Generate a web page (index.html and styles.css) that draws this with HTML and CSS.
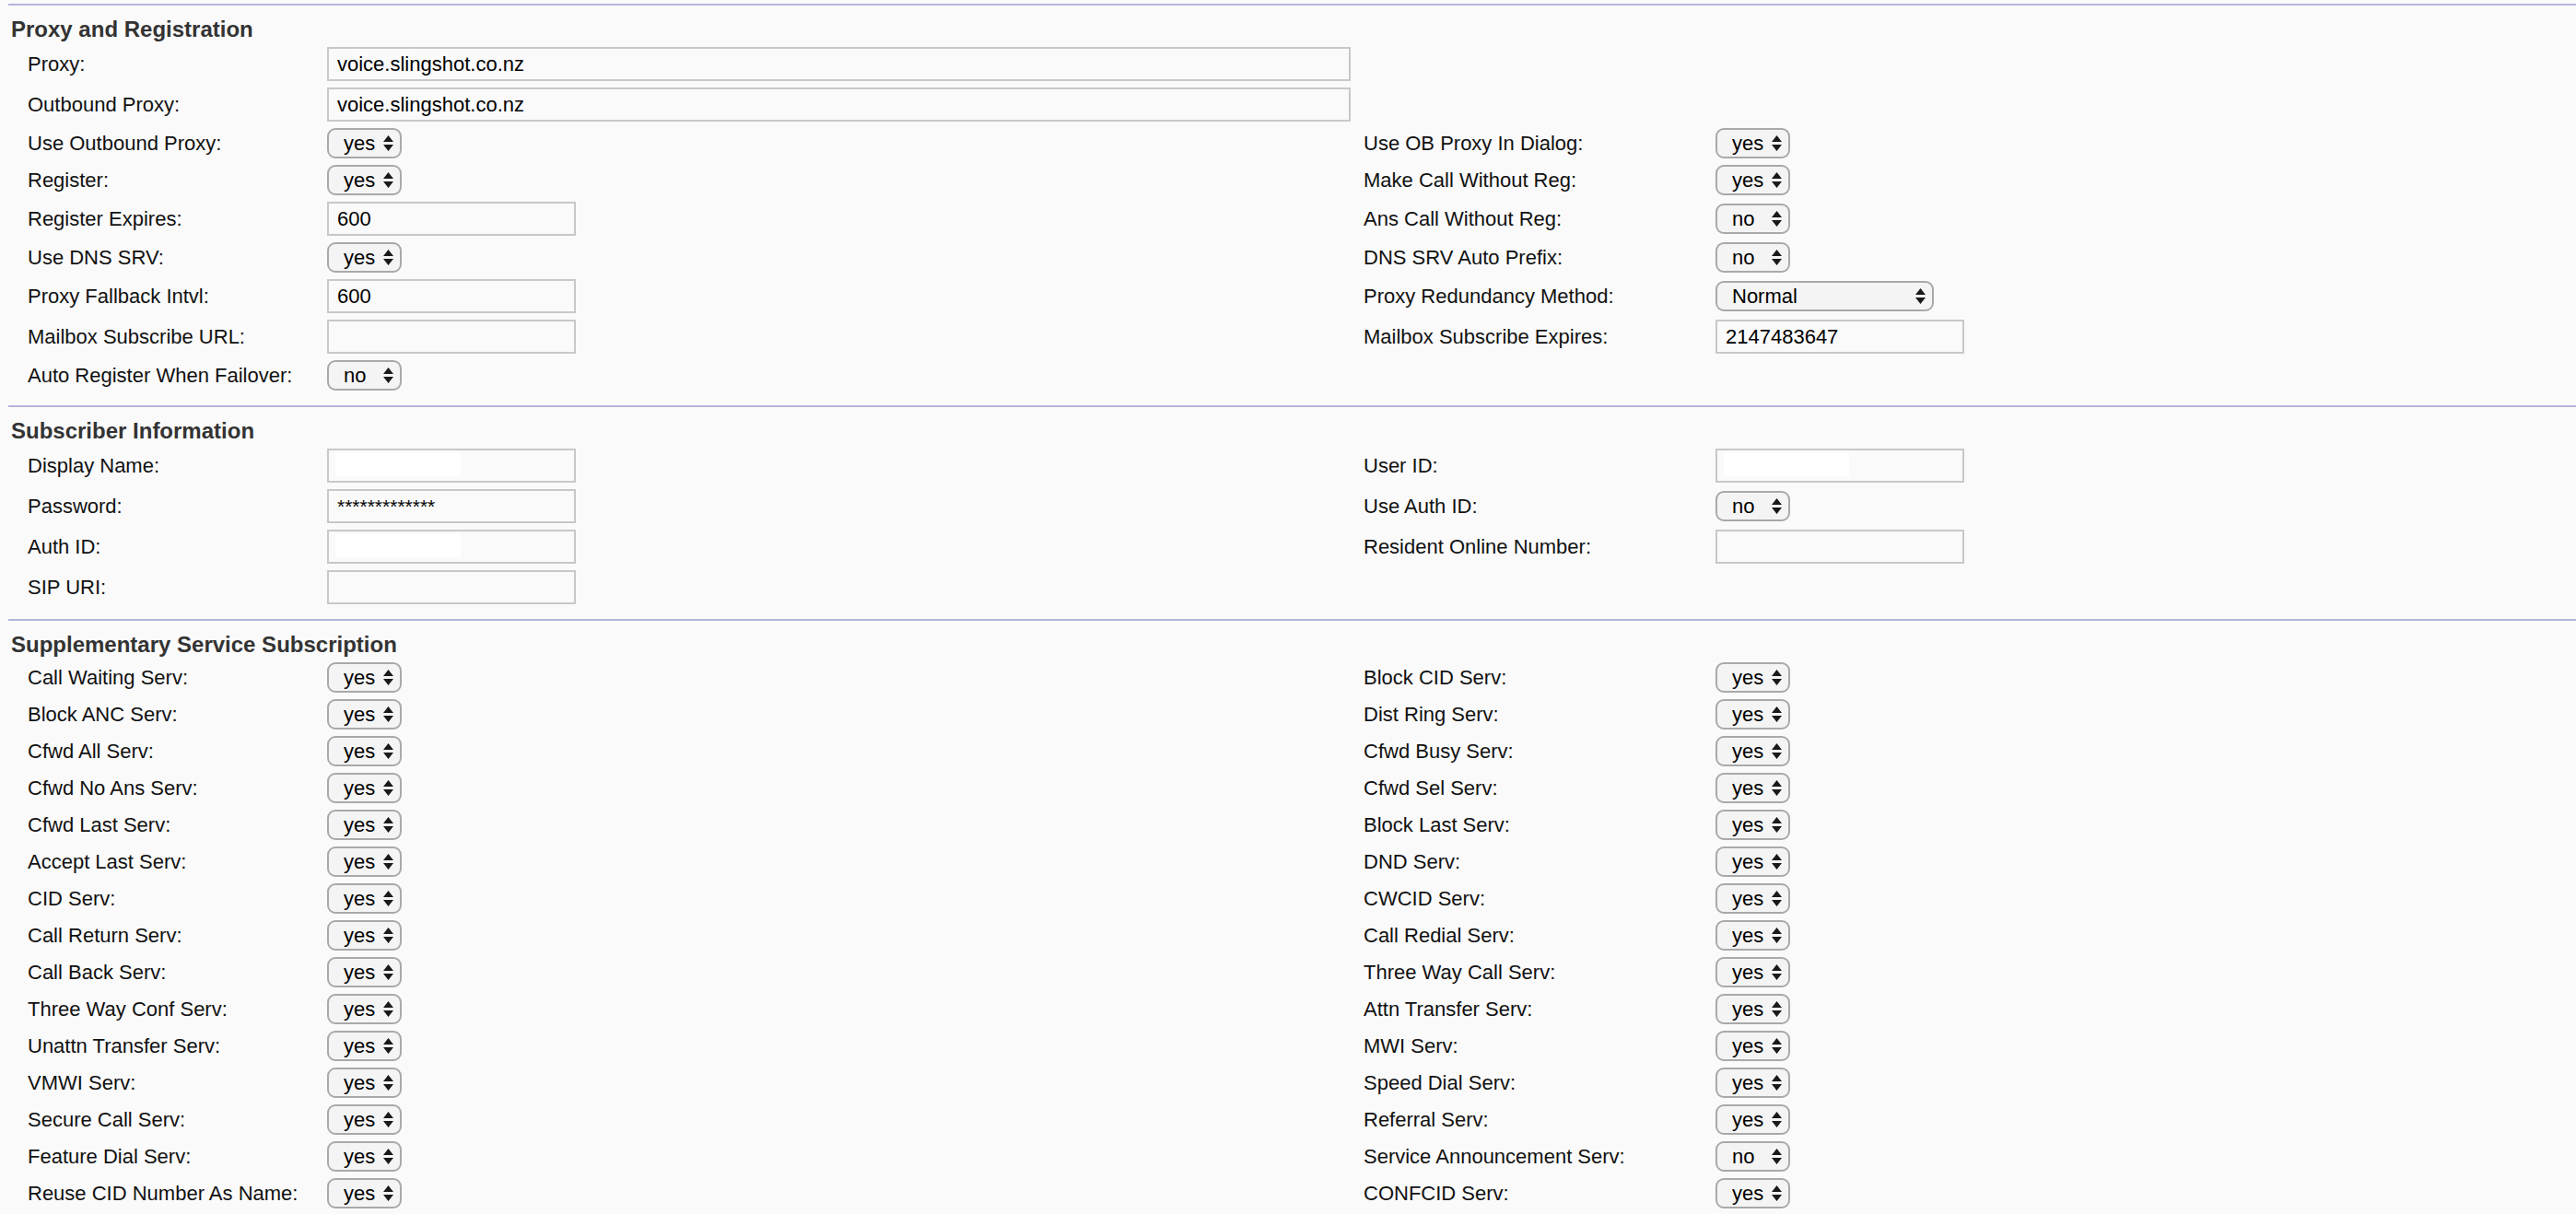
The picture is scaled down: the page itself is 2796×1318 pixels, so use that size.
FILE: index.html
```html
<!DOCTYPE html>
<html lang="en">
<head>
<meta charset="utf-8">
<title>Ext 1</title>
<link rel="stylesheet" href="styles.css">
</head>
<body>
<div class="page">

  <section class="sec">
    <h2 class="sec-title">Proxy and Registration</h2>
    <div class="row">
      <label class="lbl">Proxy:</label>
      <input class="txt wide" type="text" value="voice.slingshot.co.nz">
    </div>
    <div class="row">
      <label class="lbl">Outbound Proxy:</label>
      <input class="txt wide" type="text" value="voice.slingshot.co.nz">
    </div>
    <div class="row">
      <label class="lbl">Use Outbound Proxy:</label>
      <span class="sel"><select><option>yes</option></select><svg class="arr" viewBox="0 0 11 17"><path d="M0 7 5.5 0 11 7Z M0 10 5.5 17 11 10Z"/></svg></span>
      <label class="lbl">Use OB Proxy In Dialog:</label>
      <span class="sel"><select><option>yes</option></select><svg class="arr" viewBox="0 0 11 17"><path d="M0 7 5.5 0 11 7Z M0 10 5.5 17 11 10Z"/></svg></span>
    </div>
    <div class="row">
      <label class="lbl">Register:</label>
      <span class="sel"><select><option>yes</option></select><svg class="arr" viewBox="0 0 11 17"><path d="M0 7 5.5 0 11 7Z M0 10 5.5 17 11 10Z"/></svg></span>
      <label class="lbl">Make Call Without Reg:</label>
      <span class="sel"><select><option>yes</option></select><svg class="arr" viewBox="0 0 11 17"><path d="M0 7 5.5 0 11 7Z M0 10 5.5 17 11 10Z"/></svg></span>
    </div>
    <div class="row">
      <label class="lbl">Register Expires:</label>
      <input class="txt short" type="text" value="600">
      <label class="lbl">Ans Call Without Reg:</label>
      <span class="sel"><select><option>no</option></select><svg class="arr" viewBox="0 0 11 17"><path d="M0 7 5.5 0 11 7Z M0 10 5.5 17 11 10Z"/></svg></span>
    </div>
    <div class="row">
      <label class="lbl">Use DNS SRV:</label>
      <span class="sel"><select><option>yes</option></select><svg class="arr" viewBox="0 0 11 17"><path d="M0 7 5.5 0 11 7Z M0 10 5.5 17 11 10Z"/></svg></span>
      <label class="lbl">DNS SRV Auto Prefix:</label>
      <span class="sel"><select><option>no</option></select><svg class="arr" viewBox="0 0 11 17"><path d="M0 7 5.5 0 11 7Z M0 10 5.5 17 11 10Z"/></svg></span>
    </div>
    <div class="row">
      <label class="lbl">Proxy Fallback Intvl:</label>
      <input class="txt short" type="text" value="600">
      <label class="lbl">Proxy Redundancy Method:</label>
      <span class="sel sel-wide"><select><option>Normal</option></select><svg class="arr" viewBox="0 0 11 17"><path d="M0 7 5.5 0 11 7Z M0 10 5.5 17 11 10Z"/></svg></span>
    </div>
    <div class="row">
      <label class="lbl">Mailbox Subscribe URL:</label>
      <input class="txt short" type="text" value="">
      <label class="lbl">Mailbox Subscribe Expires:</label>
      <input class="txt short" type="text" value="2147483647">
    </div>
    <div class="row">
      <label class="lbl">Auto Register When Failover:</label>
      <span class="sel"><select><option>no</option></select><svg class="arr" viewBox="0 0 11 17"><path d="M0 7 5.5 0 11 7Z M0 10 5.5 17 11 10Z"/></svg></span>
    </div>
  </section>

  <section class="sec">
    <h2 class="sec-title">Subscriber Information</h2>
    <div class="row">
      <label class="lbl">Display Name:</label>
      <span class="fld"><input class="txt short" type="text" value=""><span class="mask"></span></span>
      <label class="lbl">User ID:</label>
      <span class="fld"><input class="txt short" type="text" value=""><span class="mask"></span></span>
    </div>
    <div class="row">
      <label class="lbl">Password:</label>
      <input class="txt short pw" type="text" value="*************">
      <label class="lbl">Use Auth ID:</label>
      <span class="sel"><select><option>no</option></select><svg class="arr" viewBox="0 0 11 17"><path d="M0 7 5.5 0 11 7Z M0 10 5.5 17 11 10Z"/></svg></span>
    </div>
    <div class="row">
      <label class="lbl">Auth ID:</label>
      <span class="fld"><input class="txt short" type="text" value=""><span class="mask"></span></span>
      <label class="lbl">Resident Online Number:</label>
      <input class="txt short" type="text" value="">
    </div>
    <div class="row">
      <label class="lbl">SIP URI:</label>
      <input class="txt short" type="text" value="">
    </div>
  </section>

  <section class="sec">
    <h2 class="sec-title">Supplementary Service Subscription</h2>
    <div class="row">
      <label class="lbl">Call Waiting Serv:</label>
      <span class="sel"><select><option>yes</option></select><svg class="arr" viewBox="0 0 11 17"><path d="M0 7 5.5 0 11 7Z M0 10 5.5 17 11 10Z"/></svg></span>
      <label class="lbl">Block CID Serv:</label>
      <span class="sel"><select><option>yes</option></select><svg class="arr" viewBox="0 0 11 17"><path d="M0 7 5.5 0 11 7Z M0 10 5.5 17 11 10Z"/></svg></span>
    </div>
    <div class="row">
      <label class="lbl">Block ANC Serv:</label>
      <span class="sel"><select><option>yes</option></select><svg class="arr" viewBox="0 0 11 17"><path d="M0 7 5.5 0 11 7Z M0 10 5.5 17 11 10Z"/></svg></span>
      <label class="lbl">Dist Ring Serv:</label>
      <span class="sel"><select><option>yes</option></select><svg class="arr" viewBox="0 0 11 17"><path d="M0 7 5.5 0 11 7Z M0 10 5.5 17 11 10Z"/></svg></span>
    </div>
    <div class="row">
      <label class="lbl">Cfwd All Serv:</label>
      <span class="sel"><select><option>yes</option></select><svg class="arr" viewBox="0 0 11 17"><path d="M0 7 5.5 0 11 7Z M0 10 5.5 17 11 10Z"/></svg></span>
      <label class="lbl">Cfwd Busy Serv:</label>
      <span class="sel"><select><option>yes</option></select><svg class="arr" viewBox="0 0 11 17"><path d="M0 7 5.5 0 11 7Z M0 10 5.5 17 11 10Z"/></svg></span>
    </div>
    <div class="row">
      <label class="lbl">Cfwd No Ans Serv:</label>
      <span class="sel"><select><option>yes</option></select><svg class="arr" viewBox="0 0 11 17"><path d="M0 7 5.5 0 11 7Z M0 10 5.5 17 11 10Z"/></svg></span>
      <label class="lbl">Cfwd Sel Serv:</label>
      <span class="sel"><select><option>yes</option></select><svg class="arr" viewBox="0 0 11 17"><path d="M0 7 5.5 0 11 7Z M0 10 5.5 17 11 10Z"/></svg></span>
    </div>
    <div class="row">
      <label class="lbl">Cfwd Last Serv:</label>
      <span class="sel"><select><option>yes</option></select><svg class="arr" viewBox="0 0 11 17"><path d="M0 7 5.5 0 11 7Z M0 10 5.5 17 11 10Z"/></svg></span>
      <label class="lbl">Block Last Serv:</label>
      <span class="sel"><select><option>yes</option></select><svg class="arr" viewBox="0 0 11 17"><path d="M0 7 5.5 0 11 7Z M0 10 5.5 17 11 10Z"/></svg></span>
    </div>
    <div class="row">
      <label class="lbl">Accept Last Serv:</label>
      <span class="sel"><select><option>yes</option></select><svg class="arr" viewBox="0 0 11 17"><path d="M0 7 5.5 0 11 7Z M0 10 5.5 17 11 10Z"/></svg></span>
      <label class="lbl">DND Serv:</label>
      <span class="sel"><select><option>yes</option></select><svg class="arr" viewBox="0 0 11 17"><path d="M0 7 5.5 0 11 7Z M0 10 5.5 17 11 10Z"/></svg></span>
    </div>
    <div class="row">
      <label class="lbl">CID Serv:</label>
      <span class="sel"><select><option>yes</option></select><svg class="arr" viewBox="0 0 11 17"><path d="M0 7 5.5 0 11 7Z M0 10 5.5 17 11 10Z"/></svg></span>
      <label class="lbl">CWCID Serv:</label>
      <span class="sel"><select><option>yes</option></select><svg class="arr" viewBox="0 0 11 17"><path d="M0 7 5.5 0 11 7Z M0 10 5.5 17 11 10Z"/></svg></span>
    </div>
    <div class="row">
      <label class="lbl">Call Return Serv:</label>
      <span class="sel"><select><option>yes</option></select><svg class="arr" viewBox="0 0 11 17"><path d="M0 7 5.5 0 11 7Z M0 10 5.5 17 11 10Z"/></svg></span>
      <label class="lbl">Call Redial Serv:</label>
      <span class="sel"><select><option>yes</option></select><svg class="arr" viewBox="0 0 11 17"><path d="M0 7 5.5 0 11 7Z M0 10 5.5 17 11 10Z"/></svg></span>
    </div>
    <div class="row">
      <label class="lbl">Call Back Serv:</label>
      <span class="sel"><select><option>yes</option></select><svg class="arr" viewBox="0 0 11 17"><path d="M0 7 5.5 0 11 7Z M0 10 5.5 17 11 10Z"/></svg></span>
      <label class="lbl">Three Way Call Serv:</label>
      <span class="sel"><select><option>yes</option></select><svg class="arr" viewBox="0 0 11 17"><path d="M0 7 5.5 0 11 7Z M0 10 5.5 17 11 10Z"/></svg></span>
    </div>
    <div class="row">
      <label class="lbl">Three Way Conf Serv:</label>
      <span class="sel"><select><option>yes</option></select><svg class="arr" viewBox="0 0 11 17"><path d="M0 7 5.5 0 11 7Z M0 10 5.5 17 11 10Z"/></svg></span>
      <label class="lbl">Attn Transfer Serv:</label>
      <span class="sel"><select><option>yes</option></select><svg class="arr" viewBox="0 0 11 17"><path d="M0 7 5.5 0 11 7Z M0 10 5.5 17 11 10Z"/></svg></span>
    </div>
    <div class="row">
      <label class="lbl">Unattn Transfer Serv:</label>
      <span class="sel"><select><option>yes</option></select><svg class="arr" viewBox="0 0 11 17"><path d="M0 7 5.5 0 11 7Z M0 10 5.5 17 11 10Z"/></svg></span>
      <label class="lbl">MWI Serv:</label>
      <span class="sel"><select><option>yes</option></select><svg class="arr" viewBox="0 0 11 17"><path d="M0 7 5.5 0 11 7Z M0 10 5.5 17 11 10Z"/></svg></span>
    </div>
    <div class="row">
      <label class="lbl">VMWI Serv:</label>
      <span class="sel"><select><option>yes</option></select><svg class="arr" viewBox="0 0 11 17"><path d="M0 7 5.5 0 11 7Z M0 10 5.5 17 11 10Z"/></svg></span>
      <label class="lbl">Speed Dial Serv:</label>
      <span class="sel"><select><option>yes</option></select><svg class="arr" viewBox="0 0 11 17"><path d="M0 7 5.5 0 11 7Z M0 10 5.5 17 11 10Z"/></svg></span>
    </div>
    <div class="row">
      <label class="lbl">Secure Call Serv:</label>
      <span class="sel"><select><option>yes</option></select><svg class="arr" viewBox="0 0 11 17"><path d="M0 7 5.5 0 11 7Z M0 10 5.5 17 11 10Z"/></svg></span>
      <label class="lbl">Referral Serv:</label>
      <span class="sel"><select><option>yes</option></select><svg class="arr" viewBox="0 0 11 17"><path d="M0 7 5.5 0 11 7Z M0 10 5.5 17 11 10Z"/></svg></span>
    </div>
    <div class="row">
      <label class="lbl">Feature Dial Serv:</label>
      <span class="sel"><select><option>yes</option></select><svg class="arr" viewBox="0 0 11 17"><path d="M0 7 5.5 0 11 7Z M0 10 5.5 17 11 10Z"/></svg></span>
      <label class="lbl">Service Announcement Serv:</label>
      <span class="sel"><select><option>no</option></select><svg class="arr" viewBox="0 0 11 17"><path d="M0 7 5.5 0 11 7Z M0 10 5.5 17 11 10Z"/></svg></span>
    </div>
    <div class="row">
      <label class="lbl">Reuse CID Number As Name:</label>
      <span class="sel"><select><option>yes</option></select><svg class="arr" viewBox="0 0 11 17"><path d="M0 7 5.5 0 11 7Z M0 10 5.5 17 11 10Z"/></svg></span>
      <label class="lbl">CONFCID Serv:</label>
      <span class="sel"><select><option>yes</option></select><svg class="arr" viewBox="0 0 11 17"><path d="M0 7 5.5 0 11 7Z M0 10 5.5 17 11 10Z"/></svg></span>
    </div>
  </section>

</div>
</body>
</html>
```

FILE: styles.css
```css
html, body {
  margin: 0;
  padding: 0;
  background: #fafafa;
  overflow: hidden;
}

body {
  font-family: "Liberation Sans", Arial, Helvetica, sans-serif;
  color: #111;
}

.page {
  padding-top: 4px;
}

.sec {
  margin-left: 9px;
  border-top: 2px solid #b4b4da;
  padding-bottom: 12px;
}

.sec-title {
  margin: 0 0 2px 0;
  padding: 12px 0 0 3px;
  font-size: 24px;
  line-height: 28px;
  font-weight: bold;
  color: #333;
}

.row {
  display: grid;
  grid-template-columns: 325px 1125px 382px 1fr;
  align-items: center;
  padding: 3px 0 4px 21px;
}

.lbl {
  font-size: 22px;
  line-height: 26px;
  color: #111;
}

.txt {
  box-sizing: border-box;
  height: 37px;
  border: 2px solid #c8c8c8;
  border-radius: 0;
  background: transparent;
  padding: 1px 9px 0;
  margin: 0;
  font-family: "Liberation Sans", Arial, Helvetica, sans-serif;
  font-size: 22px;
  color: #000;
  outline: none;
}

.wide {
  width: 1111px;
}

.short {
  width: 270px;
}

.pw {
  font-size: 21px;
}

.fld {
  position: relative;
  display: inline-block;
  width: 270px;
  height: 37px;
}

.fld .txt {
  display: block;
}

.mask {
  position: absolute;
  left: 9px;
  top: 5px;
  width: 136px;
  height: 25px;
  background: #ffffff;
}

.sel {
  position: relative;
  display: inline-block;
  width: 81px;
  height: 33px;
}

.sel-wide {
  width: 237px;
}

.sel select {
  -webkit-appearance: none;
  appearance: none;
  box-sizing: border-box;
  display: block;
  width: 100%;
  height: 33px;
  margin: 0;
  padding: 0 0 0 16px;
  border: 2px solid #a9a9a9;
  border-radius: 9px;
  background: #f4f4f4;
  font-family: "Liberation Sans", Arial, Helvetica, sans-serif;
  font-size: 22px;
  color: #000;
  outline: none;
}

.arr {
  position: absolute;
  right: 9px;
  top: 8px;
  width: 11px;
  height: 17px;
  fill: #1a1a1a;
  pointer-events: none;
}
```
